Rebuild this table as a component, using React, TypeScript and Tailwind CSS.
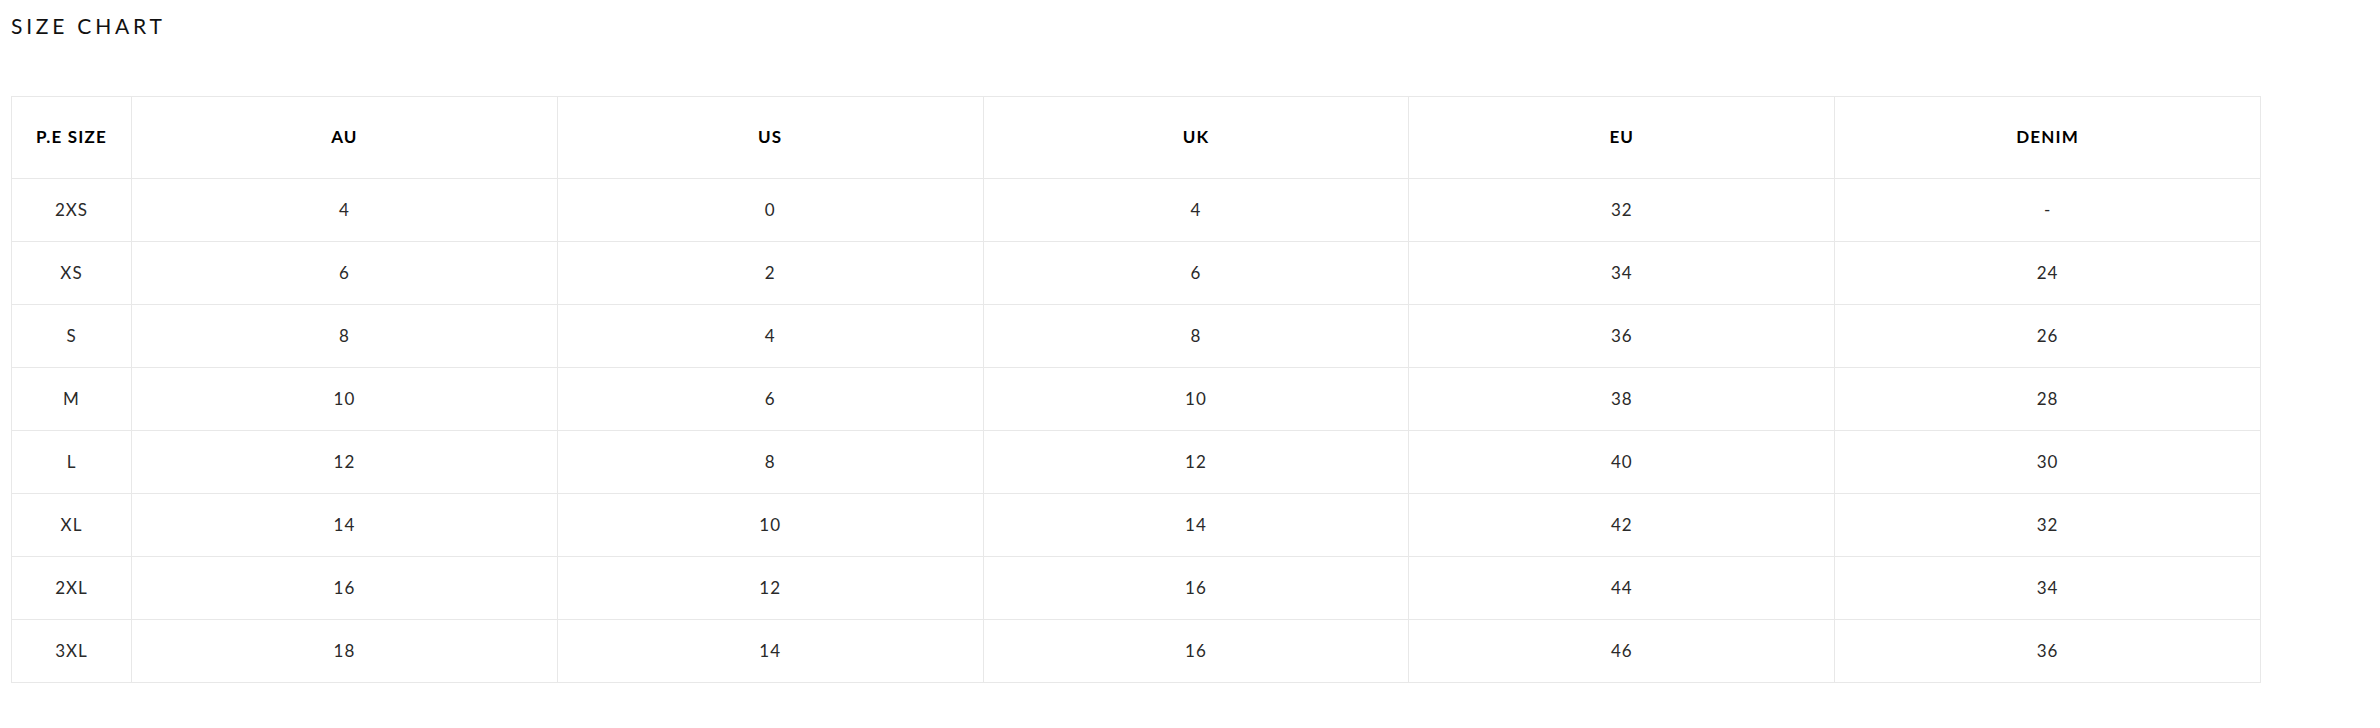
const headers = ["P.E SIZE", "AU", "US", "UK", "EU", "DENIM"];

const rows: string[][] = [
  ["2XS", "4", "0", "4", "32", "-"],
  ["XS", "6", "2", "6", "34", "24"],
  ["S", "8", "4", "8", "36", "26"],
  ["M", "10", "6", "10", "38", "28"],
  ["L", "12", "8", "12", "40", "30"],
  ["XL", "14", "10", "14", "42", "32"],
  ["2XL", "16", "12", "16", "44", "34"],
  ["3XL", "18", "14", "16", "46", "36"],
];

export default function App() {
  return (
    <div className="min-h-screen bg-white px-[11px] pt-[12px] font-['Lato',sans-serif]">
      <h1 className="text-[21px] leading-[28px] tracking-[0.18em] font-normal text-[#111]">
        SIZE CHART
      </h1>

      <table className="mt-[56px] w-[2250px] table-fixed border-collapse">
        <colgroup>
          <col className="w-[120px]" />
          <col />
          <col />
          <col />
          <col />
          <col />
        </colgroup>
        <thead>
          <tr className="h-[82px]">
            {headers.map((h) => (
              <th
                key={h}
                className="border border-[#e8e8e8] pb-[2px] text-center text-[17px] font-bold tracking-[0.07em] text-black"
              >
                {h}
              </th>
            ))}
          </tr>
        </thead>
        <tbody>
          {rows.map((r) => (
            <tr key={r[0]} className="h-[63px]">
              {r.map((c, i) => (
                <td
                  key={i}
                  className="border border-[#e8e8e8] text-center text-[17px] font-normal tracking-[0.06em] text-[#2a2a2a]"
                >
                  {c}
                </td>
              ))}
            </tr>
          ))}
        </tbody>
      </table>
    </div>
  );
}
